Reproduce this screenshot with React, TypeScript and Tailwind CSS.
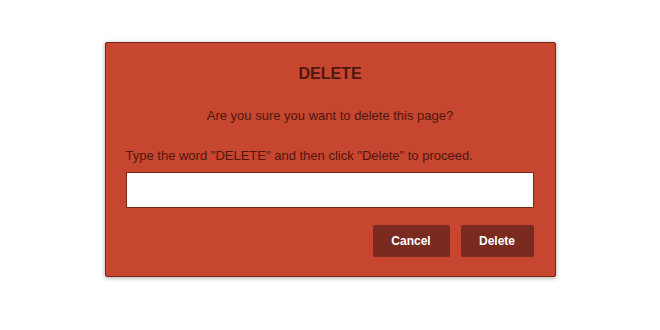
import React, { useState } from 'react';

const App = () => {
    const [value, setValue] = useState('');

    return (
        <div className="w-[660px] h-[330px] bg-white flex items-start justify-center pt-[42px] font-['Liberation_Sans',Arial,sans-serif]">
            <div className="w-[451px] h-[235px] bg-[#c7462f] border border-[#7a2518] rounded-[2px] shadow-[0_1px_4px_rgba(0,0,0,0.35)] px-[20px] pt-[21px] flex flex-col">
                <h2 className="text-center text-[16px] leading-[20px] font-bold text-[#4f170f]">DELETE</h2>
                <p className="mt-[23px] text-center text-[13px] leading-[18px] text-[#4f170f]">
                    Are you sure you want to delete this page?
                </p>
                <p className="mt-[22px] text-[13px] leading-[18px] text-[#4f170f]">
                    Type the word "DELETE" and then click "Delete" to proceed.
                </p>
                <input
                    type="text"
                    value={value}
                    onChange={(e) => setValue(e.target.value)}
                    className="mt-[7px] w-[408px] h-[36px] bg-white border border-[#7a2518] outline-none px-2 text-[13px]"
                />
                <div className="mt-[17px] flex justify-end gap-[11px] w-[408px]">
                    <button className="w-[77px] h-[32px] rounded-[2px] bg-[#7b2a1f] text-white text-[12px] font-bold">
                        Cancel
                    </button>
                    <button className="w-[73px] h-[32px] rounded-[2px] bg-[#7b2a1f] text-white text-[12px] font-bold">
                        Delete
                    </button>
                </div>
            </div>
        </div>
    );
};

export default App;
